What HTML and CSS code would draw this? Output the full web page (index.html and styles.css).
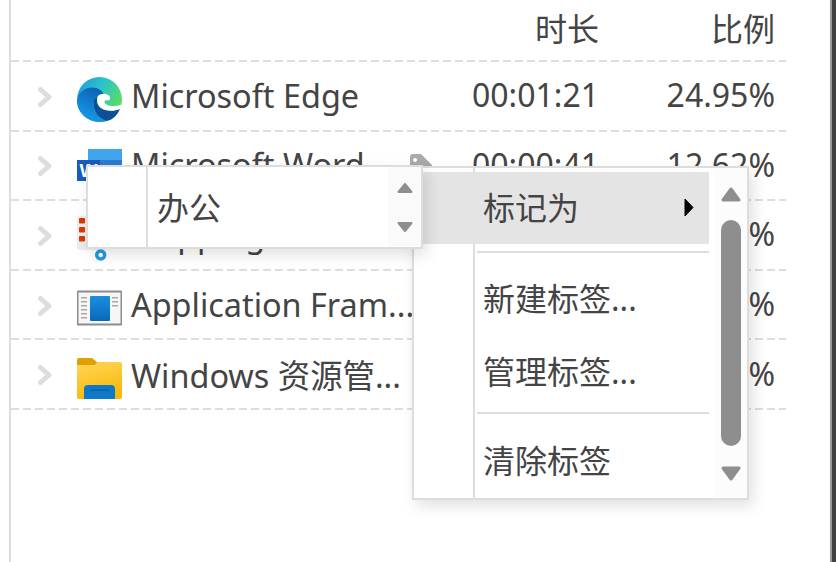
FILE: index.html
```html
<!DOCTYPE html>
<html lang="zh-CN">
<head>
    <meta charset="UTF-8">
    <title>应用使用时长</title>
    <link rel="stylesheet" href="styles.css">
</head>
<body>

<div class="pane">
    <div class="table">
        <div class="row head">
            <span class="time">时长</span>
            <span class="pct">比例</span>
        </div>

        <div class="row">
            <svg class="chev" viewBox="0 0 14 20"><path d="M2.5 2.5 11 10 2.5 17.500"/></svg>
            <svg class="icon" viewBox="0 0 45 45">
                <defs>
                    <linearGradient id="edgeTop" x1="0" y1="0.1" x2="1" y2="0.6">
                        <stop offset="0" stop-color="#1b9de2"/>
                        <stop offset="0.5" stop-color="#2cc4c8"/>
                        <stop offset="1" stop-color="#5fe05a"/>
                    </linearGradient>
                    <linearGradient id="edgeLow" x1="0.7" y1="0" x2="0.3" y2="1">
                        <stop offset="0" stop-color="#0f5fae"/>
                        <stop offset="0.5" stop-color="#0f7fd4"/>
                        <stop offset="1" stop-color="#1b9de2"/>
                    </linearGradient>
                </defs>
                <circle cx="22.500" cy="22.500" r="22.500" fill="url(#edgeTop)"/>
                <path fill="url(#edgeLow)" d="M0 24C1 15 8 10.500 15 10.500 21 10.500 26 14 27 18 21 17 16.500 21 16.500 27 16.500 35 22 42 30 44 27.500 44.800 25 45 22.500 45 10 45 0 35 0 24Z"/>
                <path fill="#0e4f9c" d="M16.500 26C16.500 35 22 42 30 44 36 42.500 40 38.500 43 32 36 35 28 34 24 31 20 28 19 23 21 19 18 20.500 16.500 23 16.500 26Z"/>
                <path fill="#fff" d="M21 19C24 16 29 16 32 18.500 33.500 20 33.500 22 32 23.500 30 23 27 23 27.500 25 28.500 28.500 36 31 44.500 27.500 44.200 29 43.800 30.500 43 32 36 35 28 34 24 31 20 28 19 23 21 19Z"/>
            </svg>
            <div class="name"><span class="label">Microsoft Edge</span></div>
            <span class="time">00:01:21</span>
            <span class="pct">24.95%</span>
        </div>

        <div class="row">
            <svg class="chev" viewBox="0 0 14 20"><path d="M2.5 2.5 11 10 2.5 17.500"/></svg>
            <svg class="icon" viewBox="0 0 45 45">
                <rect x="11" y="2" width="34" height="11" fill="#41a5ee"/>
                <rect x="11" y="13" width="34" height="11" fill="#2b7cd3"/>
                <rect x="11" y="24" width="34" height="21" fill="#185abd"/>
                <rect x="0" y="13" width="23" height="21" fill="#185abd"/>
                <text class="icon-w" x="11.500" y="30">W</text>
            </svg>
            <div class="name">
                <span class="label">Microsoft Word</span>
                <svg class="tag" viewBox="0 0 24 24"><path fill-rule="evenodd" d="M1 4Q1 1 4 1H12L23 12V24H1ZM6 5A2 2 0 1 0 6.100 5Z"/></svg>
            </div>
            <span class="time">00:00:41</span>
            <span class="pct">12.62%</span>
        </div>

        <div class="row">
            <svg class="chev" viewBox="0 0 14 20"><path d="M2.5 2.5 11 10 2.5 17.500"/></svg>
            <svg class="icon snip" viewBox="0 0 45 48">
                <rect x="0" y="0" width="30" height="34" rx="3" fill="#e9edf1"/>
                <rect x="2" y="2" width="6" height="5.500" rx="1" fill="#d83b01"/>
                <rect x="2" y="11" width="6" height="5.500" rx="1" fill="#d83b01"/>
                <rect x="2" y="20" width="6" height="5.500" rx="1" fill="#d83b01"/>
                <circle cx="23.700" cy="39" r="4" fill="#fff" stroke="#1f9be6" stroke-width="3.500"/>
            </svg>
            <div class="name"><span class="label">Snipping Tool</span></div>
            <span class="time"></span>
            <span class="pct">%</span>
        </div>

        <div class="row">
            <svg class="chev" viewBox="0 0 14 20"><path d="M2.5 2.5 11 10 2.5 17.500"/></svg>
            <svg class="icon" viewBox="0 0 45 45">
                <defs>
                    <linearGradient id="frameBlue" x1="0" y1="0" x2="0" y2="1">
                        <stop offset="0" stop-color="#1a8fe0"/>
                        <stop offset="1" stop-color="#0a68b8"/>
                    </linearGradient>
                </defs>
                <rect x="0.500" y="5.500" width="44" height="33" rx="1" fill="#f6f6f6" stroke="#8c8c8c" stroke-width="2"/>
                <rect x="4" y="11" width="6" height="1.500" fill="#a8a8a8"/>
                <rect x="4" y="15" width="6" height="1.500" fill="#a8a8a8"/>
                <rect x="4" y="19" width="6" height="1.500" fill="#a8a8a8"/>
                <rect x="4" y="23" width="6" height="1.500" fill="#a8a8a8"/>
                <rect x="4" y="27" width="6" height="1.500" fill="#a8a8a8"/>
                <rect x="4" y="31" width="6" height="1.500" fill="#a8a8a8"/>
                <rect x="35" y="11" width="6" height="1.500" fill="#a8a8a8"/>
                <rect x="35" y="15" width="6" height="1.500" fill="#a8a8a8"/>
                <rect x="35" y="19" width="6" height="1.500" fill="#a8a8a8"/>
                <rect x="13" y="10" width="20" height="25" rx="1" fill="url(#frameBlue)"/>
            </svg>
            <div class="name"><span class="label">Application Fram...</span></div>
            <span class="time"></span>
            <span class="pct">%</span>
        </div>

        <div class="row">
            <svg class="chev" viewBox="0 0 14 20"><path d="M2.5 2.5 11 10 2.5 17.500"/></svg>
            <svg class="icon" viewBox="0 0 45 45">
                <defs>
                    <linearGradient id="folderBody" x1="0" y1="0" x2="0.3" y2="1">
                        <stop offset="0" stop-color="#ffd65a"/>
                        <stop offset="1" stop-color="#f9b90c"/>
                    </linearGradient>
                </defs>
                <path fill="#e0a100" d="M0 4Q0 2 2 2H15L20 6 20 12H0Z"/>
                <path fill="url(#folderBody)" d="M0 9H18L20 6H43Q45 6 45 8V41Q45 43 43 43H2Q0 43 0 41Z"/>
                <path fill="#0c79c9" d="M7 43V33Q7 29 11 29H34Q38 29 38 33V43Z"/>
                <rect x="13" y="33.500" width="19" height="1.500" fill="#0a5ea6"/>
            </svg>
            <div class="name"><span class="label">Windows 资源管...</span></div>
            <span class="time"></span>
            <span class="pct">%</span>
        </div>
    </div>

    <!-- 右键菜单 -->
    <div class="menu main-menu">
        <div class="menu-list">
            <div class="item active">标记为<svg class="more" viewBox="0 0 10 19"><path d="M1 1 9 9.500 1 18Z"/></svg></div>
            <div class="sep first"></div>
            <div class="item">新建标签...</div>
            <div class="item">管理标签...</div>
            <div class="sep second"></div>
            <div class="item">清除标签</div>
        </div>
        <div class="scroll">
            <svg class="arrow" viewBox="0 0 20 15"><path d="M10 2 18 13H2Z"/></svg>
            <div class="thumb"></div>
            <svg class="arrow" viewBox="0 0 20 15"><path d="M10 13 18 2H2Z"/></svg>
        </div>
    </div>

    <!-- 子菜单 -->
    <div class="menu sub-menu">
        <div class="sub-item">办公</div>
        <div class="sub-scroll">
            <svg class="sub-arrow" viewBox="0 0 16 12"><path d="M8 2 14.500 10H1.500Z"/></svg>
            <svg class="sub-arrow" viewBox="0 0 16 12"><path d="M8 10 14.500 2H1.500Z"/></svg>
        </div>
    </div>
</div>

<div class="edge"></div>

</body>
</html>
```

FILE: styles.css
```css
html, body {
    height: 100%;
}
body {
    margin: 0;
    display: flex;
    overflow: hidden;
    background-color: #fff;
    color: #444;
    font-family: "Noto Sans", "Noto Sans CJK SC", sans-serif;
    font-size: 32px;
}
.pane {
    position: relative;
    flex: 1;
    margin-left: 9px;
    border-left: 2px solid #ddd;
}
.edge {
    width: 4px;
    border-left: 2px solid #999;
    background-color: #404040;
}
.table {
    width: 775px;
}
.row {
    display: flex;
    align-items: center;
    box-sizing: border-box;
    height: 69.6px;
    padding-left: 27px;
    background: repeating-linear-gradient(90deg, #ddd 0 8px, transparent 8px 12px) bottom / 100% 2px no-repeat;
}
.head {
    height: 52px;
    margin-top: 10px;
    padding-bottom: 14px;
    justify-content: flex-end;
}
.chev {
    width: 14px;
    height: 20px;
    margin-right: 25px;
    flex: none;
}
.chev path {
    fill: none;
    stroke: #ddd;
    stroke-width: 5;
    stroke-linecap: round;
    stroke-linejoin: round;
}
.icon {
    width: 45px;
    height: 45px;
    margin: 6px 9px 0 0;
    flex: none;
}
.icon-w {
    font-family: "Liberation Sans", sans-serif;
    font-size: 19px;
    font-weight: bold;
    text-anchor: middle;
    fill: #fff;
}
.snip {
    height: 48px;
    margin-top: 8px;
}
.name {
    display: flex;
    align-items: center;
    width: 302px;
    margin-top: -4px;
    flex: none;
}
.label {
    max-width: 290px;
    white-space: nowrap;
    font-size: 32.4px;
}
.tag {
    width: 24px;
    height: 24px;
    margin-left: auto;
    margin-top: 2px;
    fill: #aaa;
    flex: none;
}
.time {
    width: 166px;
    margin-top: -4px;
    flex: none;
    text-align: right;
}
.pct {
    width: 176px;
    margin-top: -4px;
    padding-right: 11px;
    flex: none;
    text-align: right;
}

.menu {
    position: absolute;
    display: flex;
    box-sizing: border-box;
    border: 2px solid #ddd;
    background-color: #fff;
    box-shadow: 4px 6px 14px rgba(0, 0, 0, 0.12);
}
.main-menu {
    left: 401px;
    top: 166px;
    width: 337px;
    height: 334px;
}
.menu-list {
    width: 295px;
    padding-top: 4px;
    background: linear-gradient(#ddd, #ddd) 59px 0 / 2px 100% no-repeat;
}
.item {
    display: flex;
    align-items: center;
    justify-content: space-between;
    box-sizing: border-box;
    height: 73px;
    padding: 0 15px 4px 69px;
}
.active {
    height: 72px;
    background-color: #e4e4e4;
}
.more {
    width: 10px;
    height: 19px;
    margin-top: 3px;
    fill: #000;
    stroke: #000;
    stroke-width: 1;
    stroke-linejoin: round;
}
.sep {
    height: 2px;
    margin-left: 63px;
    background-color: #ddd;
}
.first {
    margin-top: 7px;
    margin-bottom: 9px;
}
.second {
    margin-top: 4px;
    margin-bottom: 10px;
}
.scroll {
    display: flex;
    flex-direction: column;
    align-items: center;
    flex: 1;
    margin-left: 4px;
    padding: 19px 0 0 2px;
    background-color: #fcfcfc;
}
.arrow {
    width: 20px;
    height: 15px;
    flex: none;
    fill: #8e8e8e;
    stroke: #8e8e8e;
    stroke-width: 3;
    stroke-linejoin: round;
}
.thumb {
    width: 20px;
    height: 226px;
    margin: 18px 0 20px;
    border-radius: 10px;
    background-color: #8e8e8e;
}
.sub-menu {
    left: 75px;
    top: 165px;
    width: 337px;
    height: 84px;
    background: linear-gradient(#ddd, #ddd) 58px 0 / 2px 100% no-repeat #fff;
}
.sub-item {
    display: flex;
    align-items: center;
    flex: 1;
    padding: 0 0 2px 69px;
}
.sub-scroll {
    display: flex;
    flex-direction: column;
    align-items: center;
    gap: 27px;
    width: 33px;
    padding-top: 15px;
    box-sizing: border-box;
    background-color: #fafafa;
}
.sub-arrow {
    width: 16px;
    height: 12px;
    flex: none;
    fill: #8e8e8e;
    stroke: #8e8e8e;
    stroke-width: 2;
    stroke-linejoin: round;
}
```
